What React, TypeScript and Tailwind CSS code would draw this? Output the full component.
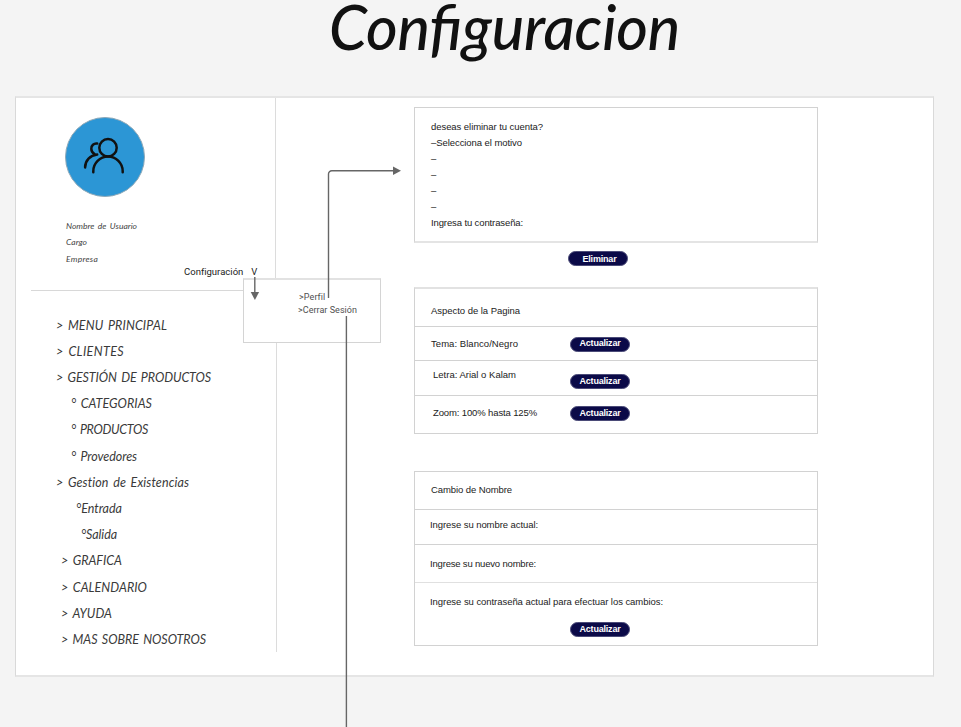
import { useLayoutEffect, useRef, useState } from "react";
import type { ReactNode } from "react";

type FitProps = { w: number; className?: string; children: string };

/** Single line of text whose tracking is adjusted so that it spans `w` pixels. */
function Fit({ w, className = "", children }: FitProps) {
  const ref = useRef<HTMLSpanElement>(null);
  const [spacing, setSpacing] = useState(0);
  useLayoutEffect(() => {
    if (ref.current) {
      const natural = ref.current.getBoundingClientRect().width - spacing * children.length;
      setSpacing((w - natural) / children.length);
    }
  }, [w, children]);
  return (
    <span ref={ref} className={`inline-block whitespace-pre ${className}`} style={{ letterSpacing: spacing }}>
      {children}
    </span>
  );
}

function Pill({ label, w, className = "" }: { label: string; w: number; className?: string }) {
  return (
    <button
      className={`flex h-[15px] w-[60px] shrink-0 items-center justify-center rounded-full border border-[#4b4b78] bg-[#0b0a48] text-[9px] leading-[13px] font-bold text-white ${className}`}
    >
      <Fit w={w}>{label}</Fit>
    </button>
  );
}

function Row({ className = "", children }: { className?: string; children: ReactNode }) {
  return <div className={`flex items-start border-[#d2d2d2] ${className}`}>{children}</div>;
}

const menu = [
  { text: "> MENU PRINCIPAL", w: 111, pad: "pl-[40px]" },
  { text: "> CLIENTES", w: 68, pad: "pl-[40px]" },
  { text: "> GESTIÓN DE PRODUCTOS", w: 155, pad: "pl-[40px]" },
  { text: "° CATEGORIAS", w: 81, pad: "pl-[55px]" },
  { text: "° PRODUCTOS", w: 77, pad: "pl-[55px]" },
  { text: "° Provedores", w: 66, pad: "pl-[55px]" },
  { text: "> Gestion de Existencias", w: 133, pad: "pl-[40px]" },
  { text: "°Entrada", w: 46, pad: "pl-[60px]" },
  { text: "°Salida", w: 36, pad: "pl-[65px]" },
  { text: "> GRAFICA", w: 61, pad: "pl-[45px]" },
  { text: "> CALENDARIO", w: 86, pad: "pl-[45px]" },
  { text: "> AYUDA", w: 51, pad: "pl-[45px]" },
  { text: "> MAS SOBRE NOSOTROS", w: 145, pad: "pl-[45px]" },
];

function Sidebar() {
  return (
    <aside className="flex w-[261px] shrink-0 flex-col">
      <div className="flex h-[181px] w-[260px] flex-col border-r border-[#dcdcdc] pt-[19px] pl-[49px]">
        <div className="flex size-[80px] shrink-0 items-center justify-center rounded-full border border-[#8fa9b8] bg-[#2c96d5]">
          <svg width="42" height="38" viewBox="0 0 42 38" fill="none" stroke="#111" strokeWidth="2.5" strokeLinecap="round" className="-mt-[2px] -ml-[2px]">
            <circle cx="25" cy="10.800" r="8.700" />
            <path d="M10.300 35.200v-1a14.700 14.700 0 0 1 29.400 0v1" />
            <path d="M14.200 6.500a5 5 0 0 0-5.900 5.300c0 2.400 1.400 4.200 3.300 5.200" />
            <path d="M14.200 17.600C7 18.300 2.300 23.500 2.100 30.400" />
          </svg>
        </div>
        <div className="mt-[21px] flex flex-col items-start pl-[1px] font-['Lato',sans-serif] text-[8.500px] leading-[16.400px] text-[#444] italic [word-spacing:1.500px]">
          <Fit w={71}>Nombre de Usuario</Fit>
          <Fit w={21}>Cargo</Fit>
          <Fit w={32}>Empresa</Fit>
        </div>
      </div>
      <div className="-mt-[14px] ml-[15px] flex h-[26px] w-[228px] items-start border-b border-[#d8d8d8] pl-[153px] font-['Roboto',sans-serif] text-[9.500px] leading-[14px] text-[#222]">
        <Fit w={59}>Configuración</Fit>
        <Fit w={7} className="ml-[8px]">V</Fit>
      </div>
      <nav className="flex h-[361px] flex-col border-r border-[#dcdcdc] pt-[22px] font-['Lato',sans-serif] text-[12.500px] text-[#3a3a3a] italic [word-spacing:1.500px]">
        {menu.map((m) => (
          <div key={m.text} className={`flex h-[26.200px] shrink-0 items-center ${m.pad}`}>
            <Fit w={m.w}>{m.text}</Fit>
          </div>
        ))}
      </nav>
    </aside>
  );
}

function SubMenu() {
  return (
    <div className="absolute top-[278px] left-[243px] flex h-[65px] w-[138px] flex-col items-start border border-t-2 border-[#d4d4d4] border-t-[#e2e2e2] bg-white pt-[11px] pl-[54px] font-['Roboto',sans-serif] text-[9px] leading-[13px] text-[#505050]">
      <Fit w={26} className="ml-[1px]">{">Perfil"}</Fit>
      <Fit w={59}>{">Cerrar Sesión"}</Fit>
    </div>
  );
}

function Connectors() {
  return (
    <svg className="pointer-events-none absolute top-0 left-0" width="961" height="727" fill="none" stroke="#666" strokeWidth="1.400">
      <path d="M328.500 298V174a3.300 3.300 0 0 1 3.300-3.300H394" />
      <path d="M393 166.500v8.400l8-4.200z" fill="#666" stroke="none" />
      <path d="M254.800 277v16" />
      <path d="M250.700 292h8.400l-4.200 8z" fill="#666" stroke="none" />
      <path d="M346.400 316v411" />
    </svg>
  );
}

export default function App() {
  return (
    <div className="relative flex h-[727px] w-[961px] flex-col overflow-hidden bg-[#f4f4f4] font-['Liberation_Sans',sans-serif]">
      <header className="flex h-[96px] shrink-0 items-start pl-[329px]">
        <h1 className="flex font-['Lato',sans-serif] text-[61px] leading-[54px] font-medium text-[#111] italic [font-feature-settings:'liga']">
          <Fit w={351}>Configuracion</Fit>
        </h1>
      </header>
      <main className="ml-[15px] flex h-[581px] w-[919px] shrink-0 border border-y-2 border-[#d9d9d9] border-y-[#e5e5e5] bg-white">
        <Sidebar />
        <section className="ml-[137px] flex w-[404px] flex-col pt-[9px] text-[9.500px] leading-[16px] text-[#222]">
          <div className="flex h-[136px] shrink-0 flex-col items-start border border-b-2 border-[#d2d2d2] border-b-[#e4e4e4] pt-[11px] pl-[16px]">
            <Fit w={112}>deseas eliminar tu cuenta?</Fit>
            <Fit w={91}>–Selecciona el motivo</Fit>
            <span>–</span>
            <span>–</span>
            <span>–</span>
            <span>–</span>
            <Fit w={92}>Ingresa tu contraseña:</Fit>
          </div>
          <Pill label="Eliminar" w={34} className="mt-[8px] ml-[154px] pt-[2px] pl-[3px]" />

          <div className="mt-[21px] flex h-[147px] shrink-0 flex-col border border-t-2 border-[#d2d2d2] border-t-[#e2e2e2]">
            <Row className="h-[38px] border-b pt-[14px] pl-[16px]">
              <Fit w={89}>Aspecto de la Pagina</Fit>
            </Row>
            <Row className="h-[34px] border-b pl-[16px]">
              <Fit w={87} className="mt-[9px]">Tema: Blanco/Negro</Fit>
              <Pill label="Actualizar" w={41} className="mt-[10px] ml-[52px] pb-[2px]" />
            </Row>
            <Row className="h-[35px] border-b pl-[18px]">
              <Fit w={83} className="mt-[6px]">Letra: Arial o Kalam</Fit>
              <Pill label="Actualizar" w={41} className="mt-[13px] ml-[54px]" />
            </Row>
            <Row className="h-[37px] pl-[18px]">
              <Fit w={104} className="mt-[9px]">Zoom: 100% hasta 125%</Fit>
              <Pill label="Actualizar" w={41} className="mt-[10px] ml-[33px]" />
            </Row>
          </div>

          <div className="mt-[37px] flex h-[175px] shrink-0 flex-col border border-[#d2d2d2]">
            <Row className="h-[38px] border-b pt-[10px] pl-[16px]">
              <Fit w={81}>Cambio de Nombre</Fit>
            </Row>
            <Row className="h-[35px] border-b pt-[7px] pl-[15px]">
              <Fit w={108}>Ingrese su nombre actual:</Fit>
            </Row>
            <Row className="h-[38px] border-b border-b-[#e0e0e0] pt-[11px] pl-[15px]">
              <Fit w={106}>Ingrese su nuevo nombre:</Fit>
            </Row>
            <div className="flex flex-col items-start pt-[11px] pl-[15px]">
              <Fit w={233}>Ingrese su contraseña actual para efectuar los cambios:</Fit>
              <Pill label="Actualizar" w={41} className="mt-[12px] ml-[140px]" />
            </div>
          </div>
        </section>
      </main>
      <SubMenu />
      <Connectors />
    </div>
  );
}
